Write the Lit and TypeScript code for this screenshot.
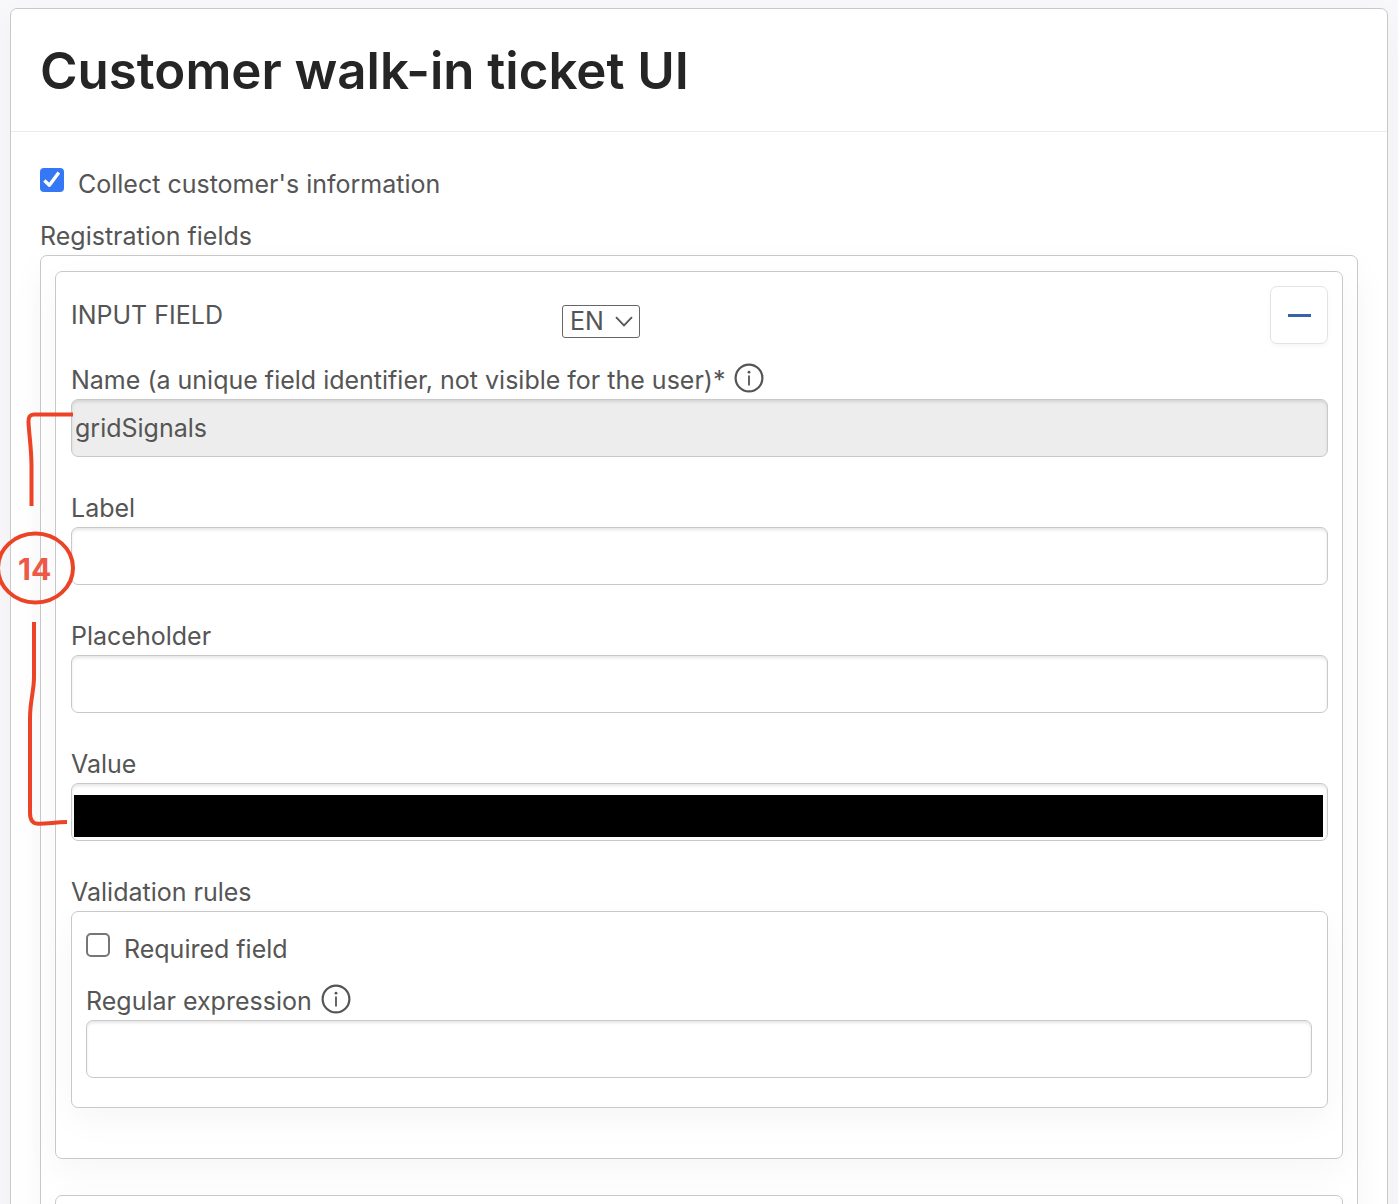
import { LitElement, html, css, svg } from "lit";
import { customElement, property, state } from "lit/decorators.js";

@customElement("info-icon")
class InfoIcon extends LitElement {
  static styles = css`
    :host { display: inline-flex; }
    svg { display: block; width: 30px; height: 30px; }
  `;

  render() {
    return html`<svg viewBox="0 0 30 30" fill="none" aria-hidden="true">
      <circle cx="15" cy="15" r="13.4" stroke="#555" stroke-width="2.2" />
      <circle cx="15" cy="9.2" r="1.4" fill="#555" />
      <path d="M15 12.6V22.4" stroke="#555" stroke-width="1.8" />
    </svg>`;
  }
}

@customElement("text-field")
class TextField extends LitElement {
  @property() label = "";
  @property() value = "";
  @property({ type: Boolean }) disabled = false;
  @property({ type: Boolean }) info = false;
  @property({ type: Boolean }) redacted = false;

  static styles = css`
    :host { display: block; }
    .caption { display: flex; align-items: center; gap: 9px; height: 38px; line-height: 38px; }
    info-icon { margin-bottom: 4px; }
    .box { position: relative; display: flex; }
    .input {
      box-sizing: border-box;
      width: 100%;
      height: 58px;
      margin: 0;
      padding: 0 3px;
      border: 1px solid #c9c9c9;
      border-radius: 7px;
      background: #fff;
      box-shadow: inset 0 2px 3px rgba(0, 0, 0, 0.1);
      color: #555;
      font: inherit;
    }
    .input:disabled { background: #ededed; opacity: 1; }
    .redaction { position: absolute; inset: 12px 5px 4px 3px; background: #000; }
  `;

  render() {
    return html`
      <div class="caption">
        <label for="field">${this.label}</label>
        ${this.info ? html`<info-icon></info-icon>` : ""}
      </div>
      <div class="box">
        <input class="input" id="field" type="text" .value=${this.value} ?disabled=${this.disabled} />
        ${this.redacted ? html`<div class="redaction"></div>` : ""}
      </div>
    `;
  }
}

@customElement("check-field")
class CheckField extends LitElement {
  @property() label = "";
  @property({ type: Boolean }) checked = false;

  static styles = css`
    :host { display: block; }
    .row { display: flex; align-items: flex-start; gap: 14px; line-height: 38px; }
    .tick {
      appearance: none;
      display: grid;
      flex: none;
      box-sizing: border-box;
      width: 24px;
      height: 24px;
      margin: 3px 0 0;
      border: 2px solid #767676;
      border-radius: 5px;
      background: #fff;
    }
    .tick:checked { border-color: #3478f6; background: #3478f6; border-radius: 4px; }
    .mark { position: absolute; left: 0; top: 3px; width: 24px; height: 24px; pointer-events: none; }
    .wrap { position: relative; display: flex; }
  `;

  private toggle(e: Event) {
    this.checked = (e.target as HTMLInputElement).checked;
  }

  render() {
    return html`<div class="row">
      <span class="wrap">
        <input class="tick" id="tick" type="checkbox" .checked=${this.checked} @change=${this.toggle} />
        ${this.checked
          ? html`<svg class="mark" viewBox="0 0 24 24" fill="none" aria-hidden="true">
              <path d="M4.4 12.6L9.4 17.2L18.8 4.6" stroke="#fff" stroke-width="3.4" stroke-linejoin="round" />
            </svg>`
          : ""}
      </span>
      <label for="tick">${this.label}</label>
    </div>`;
  }
}

@customElement("app-root")
class AppRoot extends LitElement {
  @state() private fields = [
    { label: "Label", redacted: false },
    { label: "Placeholder", redacted: false },
    { label: "Value", redacted: true },
  ];

  static styles = css`
    :host {
      display: block;
      position: relative;
      box-sizing: border-box;
      height: 100vh;
      overflow: hidden;
      padding: 8px 10px 0;
      background: #f8f8fb;
      color: #555;
      font-family: Inter, "Liberation Sans", sans-serif;
      font-size: 25px;
    }
    .panel {
      border: 1px solid #c9c9c9;
      border-radius: 7px;
      background: #fff;
      box-shadow: 0 12px 36px rgba(0, 0, 0, 0.04);
    }
    .header { padding: 29px 29px 27px; border-bottom: 1px solid #ebebeb; }
    .title { margin: 0; color: #252525; font-size: 51px; font-weight: 600; line-height: 66px; }
    .body { padding: 33px 29px 0; }
    .group-label { margin-top: 15px; line-height: 37px; }
    .group { padding: 15px 14px; }
    .card { padding: 14px 14px 50px 15px; }
    .card + .card { margin-top: 36px; }
    .bar { display: grid; grid-template-columns: 491px 1fr auto; align-items: start; }
    .kind { padding-top: 10px; line-height: 38px; }
    .lang { position: relative; justify-self: start; display: flex; margin-top: 19px; }
    .select {
      appearance: none;
      box-sizing: border-box;
      width: 78px;
      height: 33px;
      padding: 0 7px;
      border: 1px solid #666;
      border-radius: 3px;
      background: #fff;
      color: #555;
      font: inherit;
      line-height: 31px;
    }
    .chevron { position: absolute; right: 7px; top: 11px; width: 18px; height: 11px; pointer-events: none; }
    .remove {
      display: grid;
      place-items: center;
      box-sizing: border-box;
      width: 58px;
      height: 58px;
      padding: 0;
      border: 1px solid #e3e3e3;
      border-radius: 7px;
      background: #fff;
      box-shadow: 0 3px 4px rgba(0, 0, 0, 0.03);
    }
    .minus { width: 23px; height: 3px; background: #3764a8; }
    .fields { display: grid; gap: 32px; margin-top: 17px; }
    .rules-label { line-height: 38px; }
    .rules { padding: 18px 15px 29px 14px; }
    .rules text-field { margin-top: 14px; }
    .callout { position: absolute; left: 0; top: 405px; width: 80px; height: 425px; pointer-events: none; }
    .number {
      position: absolute;
      left: 18px;
      top: 550px;
      color: #ee5947;
      font-size: 30px;
      font-weight: 700;
      line-height: 38px;
    }
  `;

  private renderCallout() {
    return html`
      <svg class="callout" viewBox="0 405 80 425" fill="none" stroke="#ec4327" stroke-width="4" aria-hidden="true">
        ${svg`
          <path d="M73 414.5H34Q28 414.5 28.5 422C29 434 31.5 449 31.5 466V506" />
          <ellipse cx="35.5" cy="568" rx="37.5" ry="34.5" />
          <path d="M34 622V677C34 691 30 701 30 718V813Q30 824 39 823.8C50 823.5 56 822 67 822" />
        `}
      </svg>
      <span class="number">14</span>
    `;
  }

  render() {
    return html`
      <main class="panel">
        <header class="header"><h1 class="title">Customer walk-in ticket UI</h1></header>
        <div class="body">
          <check-field label="Collect customer's information" checked></check-field>
          <div class="group-label">Registration fields</div>
          <section class="panel group">
            <section class="panel card">
              <div class="bar">
                <span class="kind">INPUT FIELD</span>
                <span class="lang">
                  <select class="select" aria-label="Language"><option>EN</option></select>
                  <svg class="chevron" viewBox="0 0 18 11" fill="none" aria-hidden="true">
                    <path d="M1 1.2L9 9.4L17 1.2" stroke="#555" stroke-width="1.8" />
                  </svg>
                </span>
                <button class="remove" type="button" aria-label="Remove field"><span class="minus"></span></button>
              </div>
              <div class="fields">
                <text-field
                  label="Name (a unique field identifier, not visible for the user)*"
                  value="gridSignals"
                  disabled
                  info
                ></text-field>
                ${this.fields.map(
                  (f) => html`<text-field label=${f.label} ?redacted=${f.redacted}></text-field>`
                )}
                <div>
                  <div class="rules-label">Validation rules</div>
                  <div class="panel rules">
                    <check-field label="Required field"></check-field>
                    <text-field label="Regular expression" info></text-field>
                  </div>
                </div>
              </div>
            </section>
            <section class="panel card"></section>
          </section>
        </div>
      </main>
      ${this.renderCallout()}
    `;
  }
}
